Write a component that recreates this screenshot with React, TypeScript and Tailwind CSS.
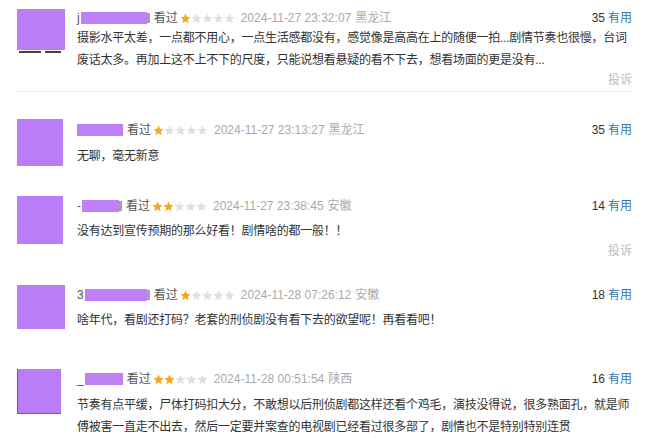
import React from "react";

type Review = {
  nameW: number;
  pre?: string;
  post?: boolean;
  stars: number;
  time: string;
  place: string;
  votes: number;
  lines: string[];
  report?: boolean;
  avatar: string;
  itemMt: string;
  headMt: string;
  textMt: string;
  divider?: boolean;
};

const reviews: Review[] = [
  {
    nameW: 66,
    pre: "j",
    post: true,
    stars: 1,
    time: "2024-11-27 23:32:07",
    place: "黑龙江",
    votes: 35,
    lines: [
      "摄影水平太差，一点都不用心，一点生活感都没有，感觉像是高高在上的随便一拍...剧情节奏也很慢，台词",
      "废话太多。再加上这不上不下的尺度，只能说想看悬疑的看不下去，想看场面的更是没有...",
    ],
    report: true,
    avatar: "w-[48px] h-[41px] mt-0",
    itemMt: "mt-[9px]",
    headMt: "mt-0",
    textMt: "mt-0",
    divider: true,
  },
  {
    nameW: 46,
    stars: 1,
    time: "2024-11-27 23:13:27",
    place: "黑龙江",
    votes: 35,
    lines: ["无聊，毫无新意"],
    avatar: "w-[46px] h-[47px]",
    itemMt: "mt-[27px]",
    headMt: "mt-[2px]",
    textMt: "mt-[6px]",
  },
  {
    nameW: 37,
    pre: "-",
    post: true,
    stars: 2,
    time: "2024-11-27 23:38:45",
    place: "安徽",
    votes: 14,
    lines: ["没有达到宣传预期的那么好看！剧情啥的都一般！！"],
    report: true,
    avatar: "w-[46px] h-[48px]",
    itemMt: "mt-[29px]",
    headMt: "mt-[1px]",
    textMt: "mt-[5px]",
  },
  {
    nameW: 62,
    pre: "3",
    post: true,
    stars: 1,
    time: "2024-11-28 07:26:12",
    place: "安徽",
    votes: 18,
    lines: ["啥年代，看剧还打码？老套的刑侦剧没有看下去的欲望呢！再看看吧！"],
    avatar: "w-[48px] h-[44px]",
    itemMt: "mt-[26px]",
    headMt: "mt-[1px]",
    textMt: "mt-[5px]",
  },
  {
    nameW: 38,
    pre: "_",
    stars: 2,
    time: "2024-11-28 00:51:54",
    place: "陕西",
    votes: 16,
    lines: [
      "节奏有点平缓，尸体打码扣大分，不敢想以后刑侦剧都这样还看个鸡毛，演技没得说，很多熟面孔，就是师",
      "傅被害一直走不出去，然后一定要并案查的电视剧已经看过很多部了，剧情也不是特别特别连贯",
    ],
    avatar: "w-[44px] h-[45px] border-l border-b border-[#7a5498]",
    itemMt: "mt-[38px]",
    headMt: "mt-[1px]",
    textMt: "mt-[6px]",
  },
];

const Star = ({ on }: { on: boolean }) => (
  <svg width="11" height="11" viewBox="0 0 24 24" className="shrink-0">
    <polygon
      points="12,1 15.2,8.3 23,9 17.1,14.3 18.9,22.2 12,18.1 5.1,22.2 6.9,14.3 1,9 8.8,8.3"
      fill={on ? "#f4a81d" : "#e0e0e0"}
    />
  </svg>
);

const Stars = ({ n }: { n: number }) => (
  <span className="flex items-center ml-[2px]">
    {[0, 1, 2, 3, 4].map((i) => (
      <Star key={i} on={i < n} />
    ))}
  </span>
);

export default function App() {
  return (
    <div
      className="w-[650px] h-[445px] overflow-hidden bg-white pl-[17px] pr-[18px] text-[12px] text-[#333]"
      style={{ fontFamily: '"Liberation Sans", "Noto Sans CJK SC", sans-serif' }}
    >
      {reviews.map((r, idx) => (
        <div
          key={idx}
          className={`${r.itemMt} ${r.divider ? "border-b border-[#f0f0f0] pb-[3px]" : ""}`}
        >
          <div className="flex">
            <div className="w-[60px] shrink-0">
              <div className={`${r.avatar} bg-[#bb7cf8]`} />
              {idx === 0 && (
                <div className="flex gap-[4px] mt-[1px] ml-[2px]">
                  <div className="w-[22px] h-[2px] bg-[#444]" />
                  <div className="w-[16px] h-[2px] bg-[#444]" />
                </div>
              )}
            </div>
            <div className="flex-1 min-w-0">
              <div className={`${r.headMt} h-[18px] flex items-center justify-between leading-[18px]`}>
                <div className="flex items-center whitespace-nowrap">
                  {r.pre && <span className="text-[#555] mr-[1px]">{r.pre}</span>}
                  <span className="h-[12px] bg-[#bf80f6]" style={{ width: r.nameW }} />
                  {r.post && <span className="w-[3px] h-[10px] bg-[#666] opacity-60" />}
                  <span className="ml-[4px] text-[#555]">看过</span>
                  <Stars n={r.stars} />
                  <span className="ml-[6px] text-[#aaa]">{r.time}</span>
                  <span className="ml-[4px] text-[#aaa]">{r.place}</span>
                </div>
                <div className="whitespace-nowrap">
                  <span className="text-[#333]">{r.votes}</span>
                  <span className="ml-[3px] text-[#3377aa]">有用</span>
                </div>
              </div>
              <div className={`${r.textMt} leading-[22px] tracking-[-0.25px]`}>
                {r.lines.map((l, i) => (
                  <div key={i} className="whitespace-nowrap">
                    {l}
                  </div>
                ))}
              </div>
              {r.report && (
                <div className="mt-[1px] h-[16px] leading-[16px] text-right text-[#bbb]">投诉</div>
              )}
            </div>
          </div>
        </div>
      ))}
    </div>
  );
}
